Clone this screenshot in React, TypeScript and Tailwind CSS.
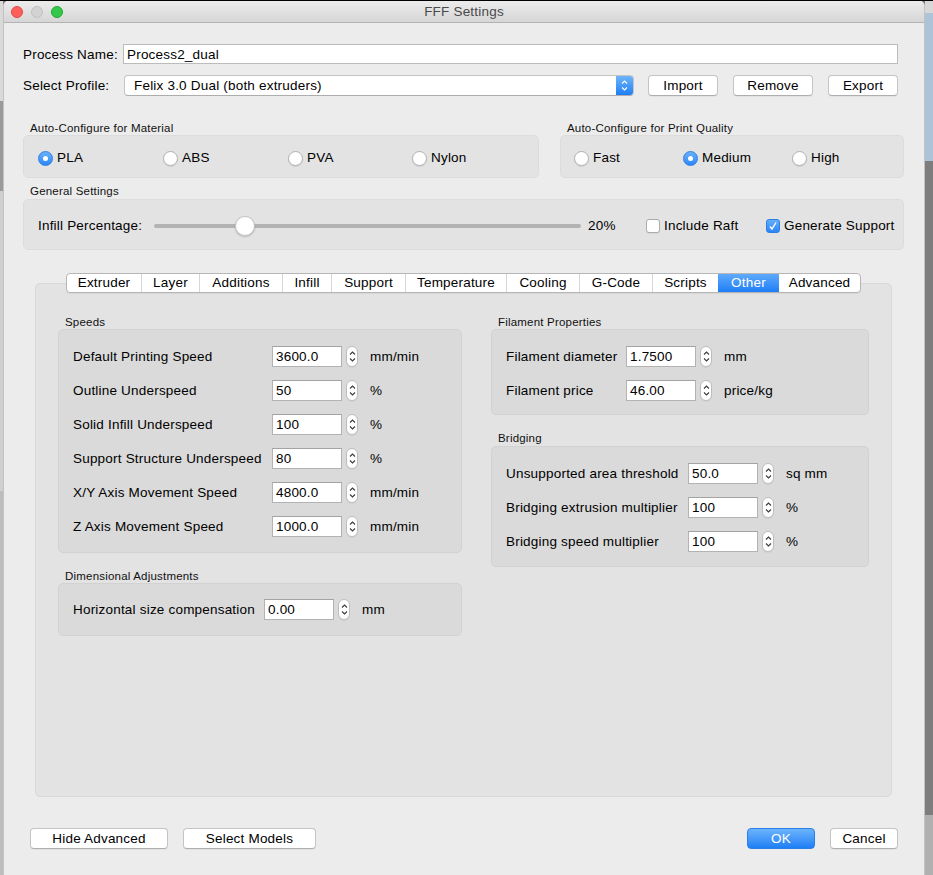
import React from "react";

const Chevrons = ({ color = "#3a3a3a" }: { color?: string }) => (
  <svg width="7" height="13" viewBox="0 0 7 13">
    <path d="M1 4.5 L3.5 2 L6 4.5" stroke={color} strokeWidth="1.1" fill="none" />
    <path d="M1 8.5 L3.5 11 L6 8.5" stroke={color} strokeWidth="1.1" fill="none" />
  </svg>
);

const Stepper = () => (
  <div className="w-[12px] h-[21px] rounded-[6px] bg-white border border-[#bdbdbd] flex items-center justify-center shadow-[0_1px_0_rgba(0,0,0,0.05)]">
    <Chevrons />
  </div>
);

const Field = ({
  label,
  value,
  unit,
  labelW,
}: {
  label: string;
  value: string;
  unit: string;
  labelW: string;
}) => (
  <div className="flex items-center h-[21px]">
    <span className={"whitespace-nowrap pt-[2px] " + labelW}>{label}</span>
    <div className="w-[70px] h-[21px] bg-white border border-[#b3b3b3] border-t-[#a3a3a3] pl-[3px] pt-[2px] flex items-center">
      {value}
    </div>
    <div className="ml-[4px]">
      <Stepper />
    </div>
    <span className="ml-[12px] pt-[2px]">{unit}</span>
  </div>
);

const Group = ({
  title,
  children,
  boxClass,
}: {
  title: string;
  children: React.ReactNode;
  boxClass: string;
}) => (
  <div className="flex flex-col">
    <div className="h-[14px] leading-[14px] text-[11.5px] tracking-[0.2px] pl-[7px] text-[#111]">{title}</div>
    <div className={"rounded-[5px] border " + boxClass}>{children}</div>
  </div>
);

const Radio = ({ checked, label, w }: { checked?: boolean; label: string; w: string }) => (
  <div className={"flex items-center " + w}>
    {checked ? (
      <div className="w-[15px] h-[15px] rounded-full bg-gradient-to-b from-[#69b1fb] to-[#2a87f5] border border-[#2c7fe6] flex items-center justify-center">
        <div className="w-[5px] h-[5px] rounded-full bg-white" />
      </div>
    ) : (
      <div className="w-[15px] h-[15px] rounded-full bg-white border border-[#b0b0b0] shadow-[0_1px_1px_rgba(0,0,0,0.08)]" />
    )}
    <span className="ml-[4px]">{label}</span>
  </div>
);

const Button = ({ label, w, primary }: { label: string; w: string; primary?: boolean }) =>
  primary ? (
    <div
      className={
        "h-[21px] rounded-[4px] bg-gradient-to-b from-[#6bb4fb] to-[#1c7ef5] border border-[#2a7fe8] text-white flex items-center justify-center pt-[2px] " +
        w
      }
    >
      {label}
    </div>
  ) : (
    <div
      className={
        "h-[21px] rounded-[4px] bg-white border border-[#c4c4c4] border-b-[#aeaeae] text-black flex items-center justify-center pt-[2px] shadow-[0_1px_0_rgba(0,0,0,0.04)] " +
        w
      }
    >
      {label}
    </div>
  );

const tabs: [string, string][] = [
  ["Extruder", "w-[74px]"],
  ["Layer", "w-[58px]"],
  ["Additions", "w-[83px]"],
  ["Infill", "w-[49px]"],
  ["Support", "w-[74px]"],
  ["Temperature", "w-[101px]"],
  ["Cooling", "w-[73px]"],
  ["G-Code", "w-[73px]"],
  ["Scripts", "w-[66px]"],
  ["Other", "w-[61px]"],
  ["Advanced", "w-[81px]"],
];

export default function App() {
  return (
    <div className="w-[933px] h-[875px] overflow-hidden flex border-t border-black font-['Liberation_Sans',Arial,sans-serif] text-[13.5px] tracking-[0.2px] text-black bg-[#7a7a7a]">
      {/* left background strip */}
      <div className="w-[3px] flex flex-col">
        <div className="h-[100px] bg-[#d9d9d9]" />
        <div className="h-[90px] bg-[#9a9a9a]" />
        <div className="h-[300px] bg-[#cfcfcf]" />
        <div className="flex-1 bg-[#bdbdbd]" />
      </div>

      {/* window */}
      <div className="w-[922px] flex flex-col bg-[#ececec] border-l border-r border-[#c2c2c2] rounded-t-[5px] overflow-hidden">
        {/* title bar */}
        <div className="h-[22px] relative flex items-center justify-center bg-gradient-to-b from-[#ececec] to-[#d6d6d6] border-b border-[#b3b3b3]">
          <div className="absolute left-[7px] top-[5px] flex gap-[8px]">
            <div className="w-[12px] h-[12px] rounded-full bg-[#fc605c] border border-[#df4944]" />
            <div className="w-[12px] h-[12px] rounded-full bg-[#d3d3d3] border border-[#c0c0c0]" />
            <div className="w-[12px] h-[12px] rounded-full bg-[#34c84a] border border-[#22a636]" />
          </div>
          <span className="text-[#4a4a4a] pt-[1px]">FFF Settings</span>
        </div>

        {/* body */}
        <div className="flex flex-col pl-[19px] pr-[20px]">
          {/* Process name */}
          <div className="flex items-center mt-[21px] h-[20px] mr-[6px]">
            <span className="w-[100px] pt-[2px]">Process Name:</span>
            <div className="flex-1 h-[20px] bg-white border border-[#bcbcbc] pl-[3px] pt-[2px] flex items-center">
              Process2_dual
            </div>
          </div>

          {/* Select profile */}
          <div className="flex items-center mt-[11px] h-[21px]">
            <span className="w-[101px] pt-[2px]">Select Profile:</span>
            <div className="w-[510px] h-[21px] flex rounded-[4px] bg-white border border-[#c4c4c4] border-b-[#adadad] overflow-hidden">
              <div className="flex-1 pl-[9px] pt-[2px] flex items-center">Felix 3.0 Dual (both extruders)</div>
              <div className="w-[17px] h-full bg-gradient-to-b from-[#6cb5fb] to-[#1b7ef5] flex items-center justify-center">
                <Chevrons color="#ffffff" />
              </div>
            </div>
            <div className="ml-[14px]">
              <Button label="Import" w="w-[70px]" />
            </div>
            <div className="ml-[15px]">
              <Button label="Remove" w="w-[80px]" />
            </div>
            <div className="ml-[15px]">
              <Button label="Export" w="w-[70px]" />
            </div>
          </div>

          {/* Auto configure */}
          <div className="flex mt-[25px] gap-[21px]">
            <div className="w-[516px]">
              <Group title="Auto-Configure for Material" boxClass="bg-[#e3e3e3] border-[#dcdcdc]">
                <div className="h-[41px] flex items-center pl-[14px] pt-[3px]">
                  <Radio checked label="PLA" w="w-[125px]" />
                  <Radio label="ABS" w="w-[125px]" />
                  <Radio label="PVA" w="w-[124px]" />
                  <Radio label="Nylon" w="w-[100px]" />
                </div>
              </Group>
            </div>
            <div className="flex-1">
              <Group title="Auto-Configure for Print Quality" boxClass="bg-[#e3e3e3] border-[#dcdcdc]">
                <div className="h-[41px] flex items-center pl-[13px] pt-[3px]">
                  <Radio label="Fast" w="w-[109px]" />
                  <Radio checked label="Medium" w="w-[109px]" />
                  <Radio label="High" w="w-[100px]" />
                </div>
              </Group>
            </div>
          </div>

          {/* General settings */}
          <div className="mt-[6px]">
            <Group title="General Settings" boxClass="mt-[1px] bg-[#e3e3e3] border-[#dcdcdc]">
              <div className="h-[49px] flex items-center pl-[14px] pt-[2px]">
                <span className="w-[116px] pt-[1px]">Infill Percentage:</span>
                <div className="w-[427px] h-[20px] relative flex items-center">
                  <div className="w-full h-[4px] rounded-full bg-[#b3b3b3]" />
                  <div className="absolute left-[81px] top-0 w-[20px] h-[20px] rounded-full bg-white border border-[#c4c4c4] shadow-[0_1px_2px_rgba(0,0,0,0.2)]" />
                </div>
                <span className="ml-[7px] w-[58px] pt-[1px]">20%</span>
                <div className="w-[14px] h-[14px] rounded-[3px] bg-white border border-[#acacac] shadow-[0_1px_1px_rgba(0,0,0,0.06)]" />
                <span className="ml-[4px] w-[102px] pt-[1px]">Include Raft</span>
                <div className="w-[14px] h-[14px] rounded-[3px] bg-gradient-to-b from-[#64adfa] to-[#2a86f5] border border-[#2b7fe6] flex items-center justify-center">
                  <svg width="10" height="10" viewBox="0 0 10 10">
                    <path d="M2 5.5 L4 8 L8 1.5" stroke="#fff" strokeWidth="1.4" fill="none" />
                  </svg>
                </div>
                <span className="ml-[4px] whitespace-nowrap pt-[1px]">Generate Support</span>
              </div>
            </Group>
          </div>

          {/* Tabs */}
          <div className="mt-[23px] mx-[12px] flex flex-col">
            <div className="relative z-10 flex justify-center">
              <div className="flex h-[20px] rounded-[4px] border border-[#b6b6b6] bg-white overflow-hidden shadow-[0_1px_1px_rgba(0,0,0,0.06)]">
                {tabs.map(([t, w], i) =>
                  t === "Other" ? (
                    <div
                      key={t}
                      className={"h-full flex items-center justify-center pt-[1px] text-white bg-gradient-to-b from-[#5eaafb] to-[#1b7df5] " + w}
                    >
                      {t}
                    </div>
                  ) : (
                    <div
                      key={t}
                      className={
                        "h-full flex items-center justify-center pt-[1px] " +
                        (i > 0 && tabs[i - 1][0] !== "Other" ? "border-l border-[#d6d6d6] " : "") +
                        w
                      }
                    >
                      {t}
                    </div>
                  )
                )}
              </div>
            </div>
            <div className="mt-[-10px] h-[514px] rounded-[5px] bg-[#e3e3e3] border border-[#d9d9d9] pt-[31px] px-[22px] flex gap-[29px]">
              {/* left column */}
              <div className="w-[404px] flex flex-col">
                <Group title="Speeds" boxClass="bg-[#dadada] border-[#d2d2d2] pt-[16px] pb-[15px] pl-[14px] flex flex-col gap-[13px]">
                  <Field label="Default Printing Speed" value="3600.0" unit="mm/min" labelW="w-[199px]" />
                  <Field label="Outline Underspeed" value="50" unit="%" labelW="w-[199px]" />
                  <Field label="Solid Infill Underspeed" value="100" unit="%" labelW="w-[199px]" />
                  <Field label="Support Structure Underspeed" value="80" unit="%" labelW="w-[199px]" />
                  <Field label="X/Y Axis Movement Speed" value="4800.0" unit="mm/min" labelW="w-[199px]" />
                  <Field label="Z Axis Movement Speed" value="1000.0" unit="mm/min" labelW="w-[199px]" />
                </Group>
                <div className="mt-[16px]">
                  <Group title="Dimensional Adjustments" boxClass="bg-[#dadada] border-[#d2d2d2] pt-[15px] pb-[15px] pl-[14px]">
                    <Field label="Horizontal size compensation" value="0.00" unit="mm" labelW="w-[191px]" />
                  </Group>
                </div>
              </div>
              {/* right column */}
              <div className="w-[378px] flex flex-col">
                <Group title="Filament Properties" boxClass="bg-[#dadada] border-[#d2d2d2] pt-[16px] pb-[13px] pl-[14px] flex flex-col gap-[13px]">
                  <Field label="Filament diameter" value="1.7500" unit="mm" labelW="w-[120px]" />
                  <Field label="Filament price" value="46.00" unit="price/kg" labelW="w-[120px]" />
                </Group>
                <div className="mt-[16px]">
                  <Group title="Bridging" boxClass="mt-[1px] bg-[#dadada] border-[#d2d2d2] pt-[16px] pb-[14px] pl-[14px] flex flex-col gap-[13px]">
                    <Field label="Unsupported area threshold" value="50.0" unit="sq mm" labelW="w-[182px]" />
                    <Field label="Bridging extrusion multiplier" value="100" unit="%" labelW="w-[182px]" />
                    <Field label="Bridging speed multiplier" value="100" unit="%" labelW="w-[182px]" />
                  </Group>
                </div>
              </div>
            </div>
          </div>

          {/* bottom buttons */}
          <div className="mt-[31px] flex items-center pl-[7px] pr-[6px]">
            <Button label="Hide Advanced" w="w-[138px]" />
            <div className="ml-[15px]">
              <Button label="Select Models" w="w-[133px]" />
            </div>
            <div className="flex-1" />
            <Button primary label="OK" w="w-[68px]" />
            <div className="ml-[15px]">
              <Button label="Cancel" w="w-[68px]" />
            </div>
          </div>
        </div>
      </div>

      {/* right background strip */}
      <div className="flex-1 flex flex-col">
        <div className="h-[12px] bg-[#d8d8d8]" />
        <div className="h-[148px] bg-[#adc4d8]" />
        <div className="flex-1 bg-[#7d7d7d]" />
        <div className="h-[60px] bg-[#b0b0b0]" />
      </div>
    </div>
  );
}
